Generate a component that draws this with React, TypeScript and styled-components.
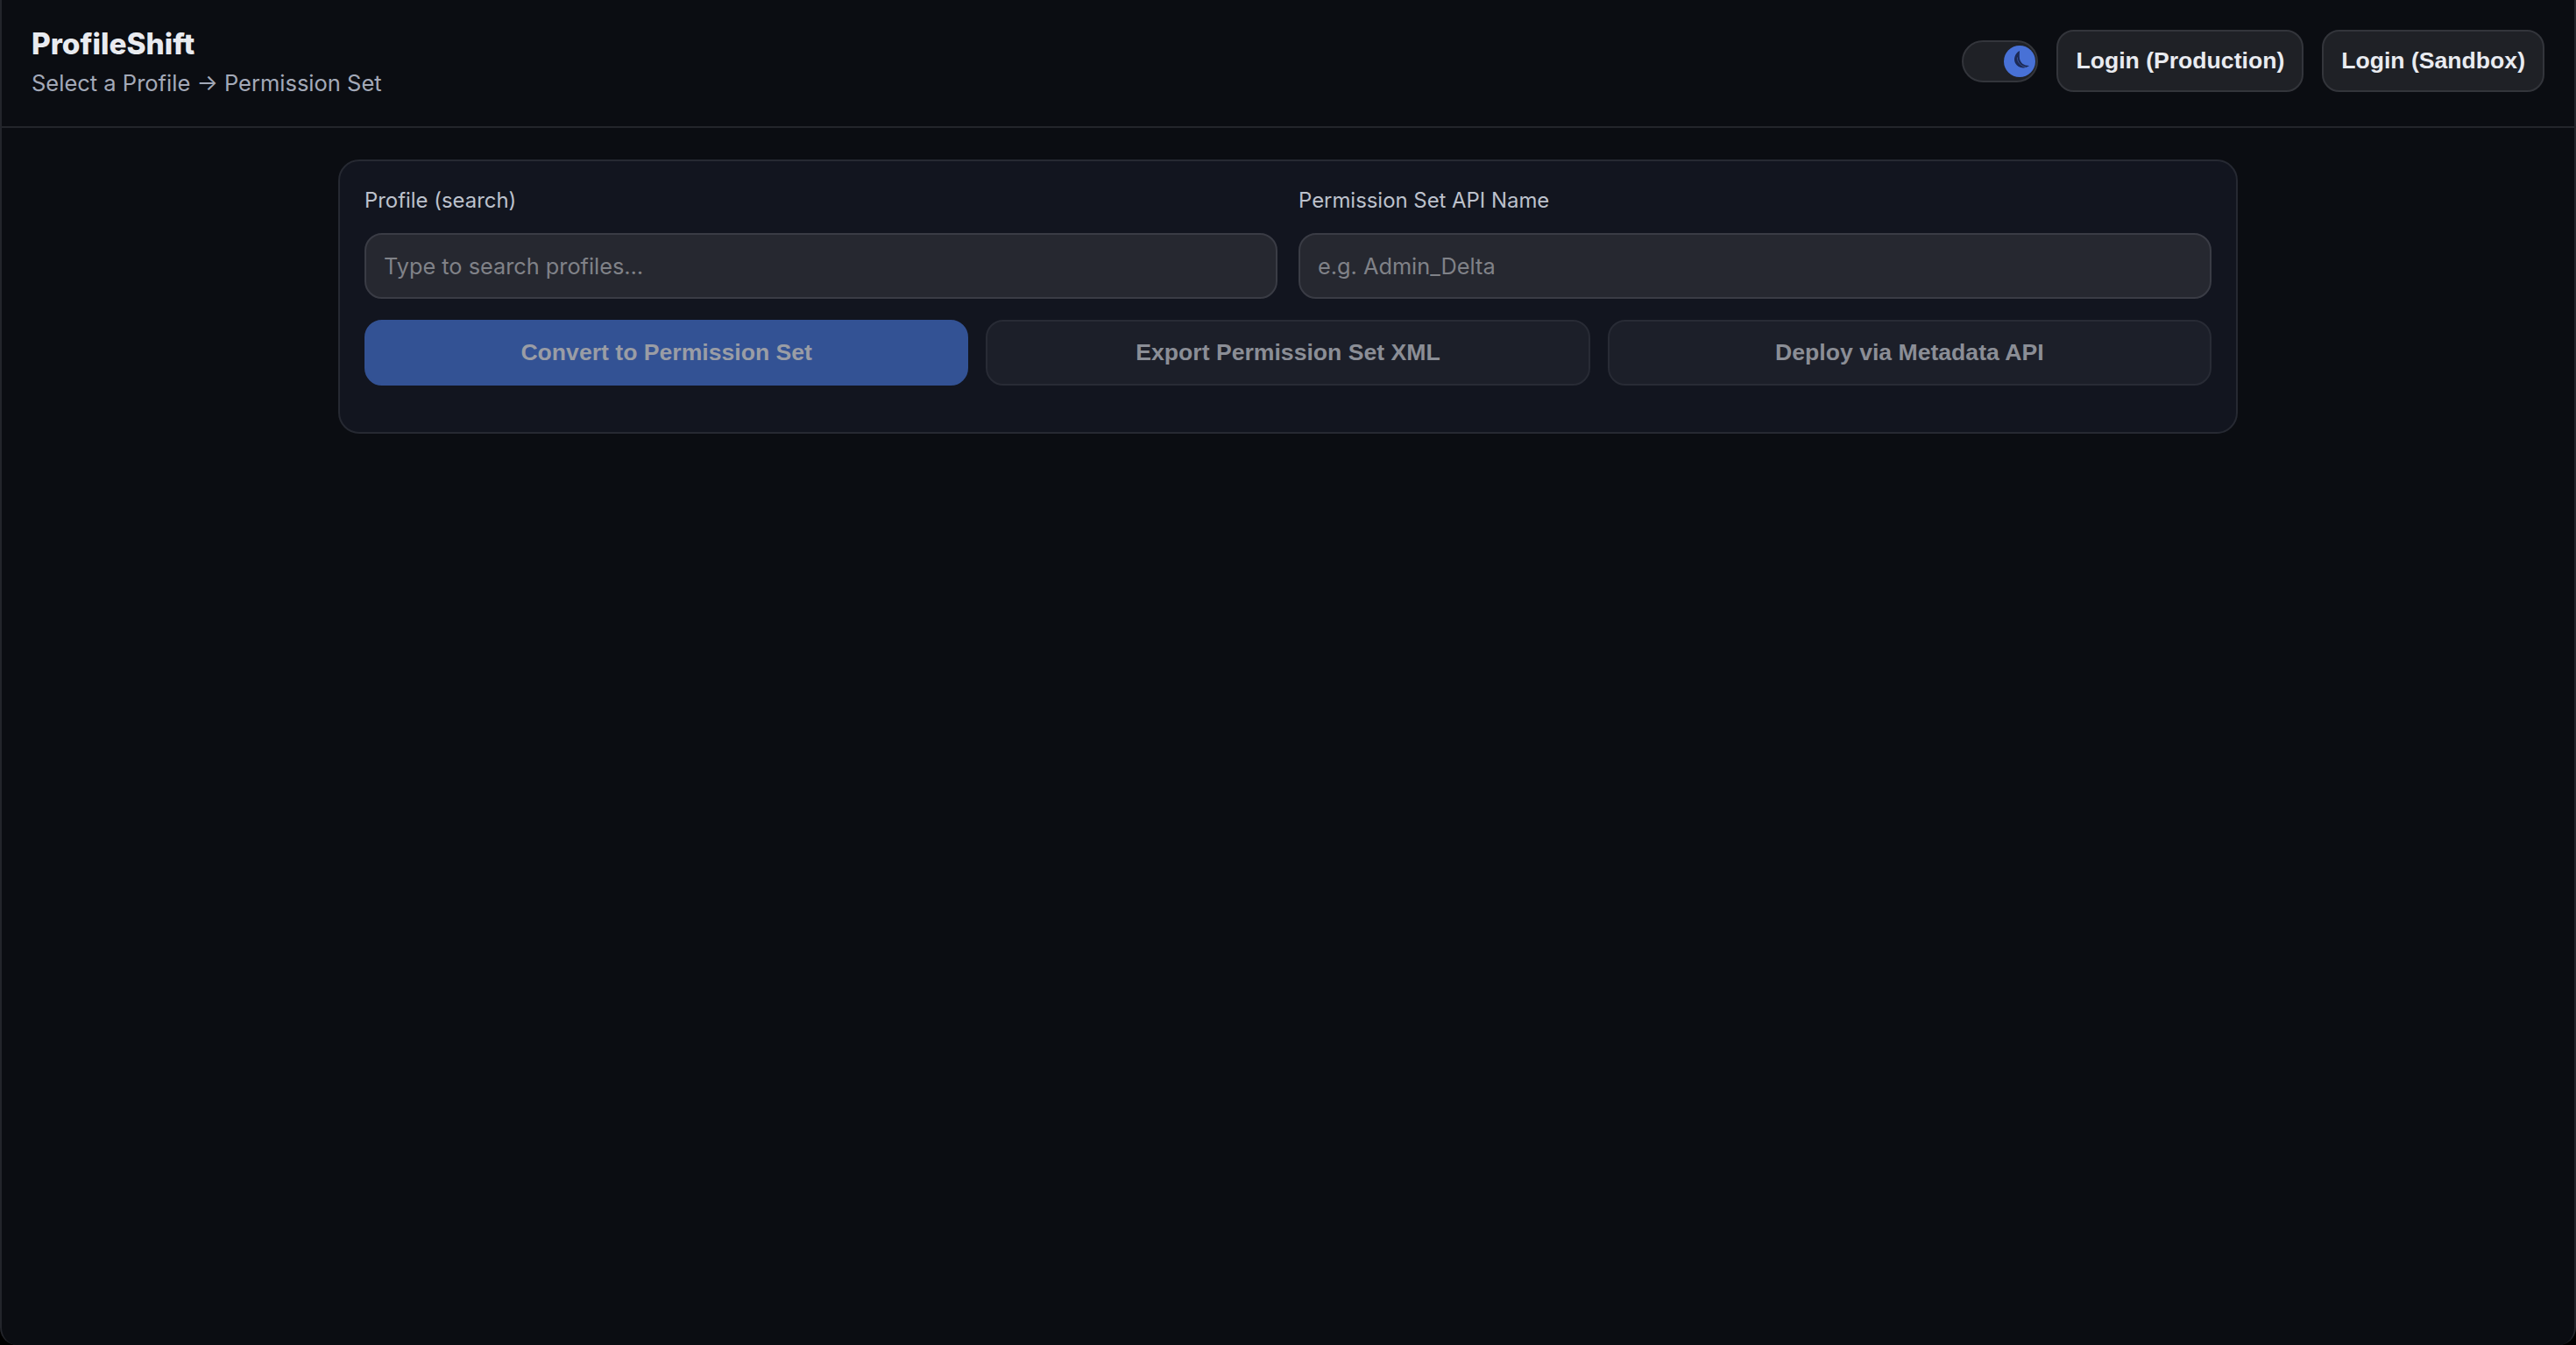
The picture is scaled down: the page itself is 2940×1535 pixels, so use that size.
import React from 'react';
import styled, { createGlobalStyle } from 'styled-components';

const GlobalStyle = createGlobalStyle`
  html,
  body {
    margin: 0;
    height: 100%;
    background: #000;
  }

  #root {
    height: 100%;
  }

  * {
    box-sizing: border-box;
  }
`;

const Page = styled.div`
  height: 1535px;
  background: #0b0d12;
  border-left: 2px solid #23252b;
  border-right: 2px solid #23252b;
  border-radius: 0 0 20px 20px;
  font-family: Inter, 'Liberation Sans', sans-serif;
  overflow: hidden;
`;

const Header = styled.header`
  height: 146px;
  padding: 0 34px;
  display: flex;
  align-items: center;
  justify-content: space-between;
  border-bottom: 2px solid #23252b;
`;

const Brand = styled.div`
  display: flex;
  flex-direction: column;
  gap: 7px;
  margin-bottom: 2px;
`;

const Title = styled.div`
  font-size: 33.4px;
  line-height: 40px;
  font-weight: 800;
  color: #e9ebf0;
`;

const Subtitle = styled.div`
  font-size: 25.5px;
  line-height: 36px;
  color: #a3a9b8;
`;

const Actions = styled.div`
  display: flex;
  align-items: center;
  gap: 21px;
  margin-bottom: 5px;
`;

const Toggle = styled.div`
  width: 87px;
  height: 48px;
  padding: 0 1px;
  display: flex;
  align-items: center;
  justify-content: flex-end;
  background: #1f2126;
  border: 2px solid #33353b;
  border-radius: 24px;
`;

const Knob = styled.div`
  width: 36px;
  height: 36px;
  background: #4871d6;
  border-radius: 50%;
`;

const LoginButton = styled.button`
  height: 71px;
  padding: 0 20px;
  background: #1f2126;
  border: 2px solid #33353b;
  border-radius: 20px;
  color: #e9ebf0;
  font-family: 'Liberation Sans', Arial, sans-serif;
  font-size: 26.6px;
  font-weight: 700;
`;

const Main = styled.main`
  width: 2168px;
  margin: 36px auto 0;
`;

const Card = styled.section`
  height: 313px;
  padding: 29px 28px;
  background: #12151f;
  border: 2px solid #262932;
  border-radius: 24px;
`;

const Fields = styled.div`
  display: grid;
  grid-template-columns: 1fr 1fr;
  gap: 24px;
`;

const Field = styled.label`
  display: flex;
  flex-direction: column;
  gap: 21px;
`;

const LabelText = styled.span`
  font-size: 23.9px;
  line-height: 32px;
  color: #bcc1cc;
`;

const TextInput = styled.input`
  width: 100%;
  height: 75px;
  padding: 0 20px;
  background: #262830;
  border: 2px solid #3a3c45;
  border-radius: 20px;
  color: #e9ebf0;
  font-family: Inter, sans-serif;
  font-size: 25.3px;

  &::placeholder {
    color: #808288;
    opacity: 1;
  }
`;

const ButtonRow = styled.div`
  margin-top: 24px;
  display: grid;
  grid-template-columns: repeat(3, 1fr);
  gap: 20px;
`;

const ActionButton = styled.button<{ $primary?: boolean }>`
  height: 75px;
  background: ${p => (p.$primary ? '#335294' : '#1c1f29')};
  border: 2px solid ${p => (p.$primary ? '#335294' : '#282b35')};
  border-radius: 20px;
  color: ${p => (p.$primary ? '#9a9da5' : '#8b8e96')};
  font-family: 'Liberation Sans', Arial, sans-serif;
  font-size: 26.6px;
  font-weight: 700;
`;

const MoonIcon = () => (
  <svg width='36' height='36' viewBox='0 0 36 36' fill='none'>
    <path d='M18 6C12 9 11 16 13 20c3 6 11 7 16 3-6 0-10-3-11-8-.5-3 0-7 0-9Z' fill='#1c2a55' />
    <path d='M15.5 13.5c-.5 5 4 10.5 9.5 10.8' stroke='#3d5ba6' strokeWidth='0.8' />
  </svg>
);

export default function App() {
  return (
    <Page>
      <GlobalStyle />
      <Header>
        <Brand>
          <Title>ProfileShift</Title>
          <Subtitle>Select a Profile → Permission Set</Subtitle>
        </Brand>
        <Actions>
          <Toggle>
            <Knob>
              <MoonIcon />
            </Knob>
          </Toggle>
          <LoginButton>Login (Production)</LoginButton>
          <LoginButton>Login (Sandbox)</LoginButton>
        </Actions>
      </Header>
      <Main>
        <Card>
          <Fields>
            <Field>
              <LabelText>Profile (search)</LabelText>
              <TextInput placeholder='Type to search profiles…' />
            </Field>
            <Field>
              <LabelText>Permission Set API Name</LabelText>
              <TextInput placeholder='e.g. Admin_Delta' />
            </Field>
          </Fields>
          <ButtonRow>
            <ActionButton $primary>Convert to Permission Set</ActionButton>
            <ActionButton>Export Permission Set XML</ActionButton>
            <ActionButton>Deploy via Metadata API</ActionButton>
          </ButtonRow>
        </Card>
      </Main>
    </Page>
  );
}
